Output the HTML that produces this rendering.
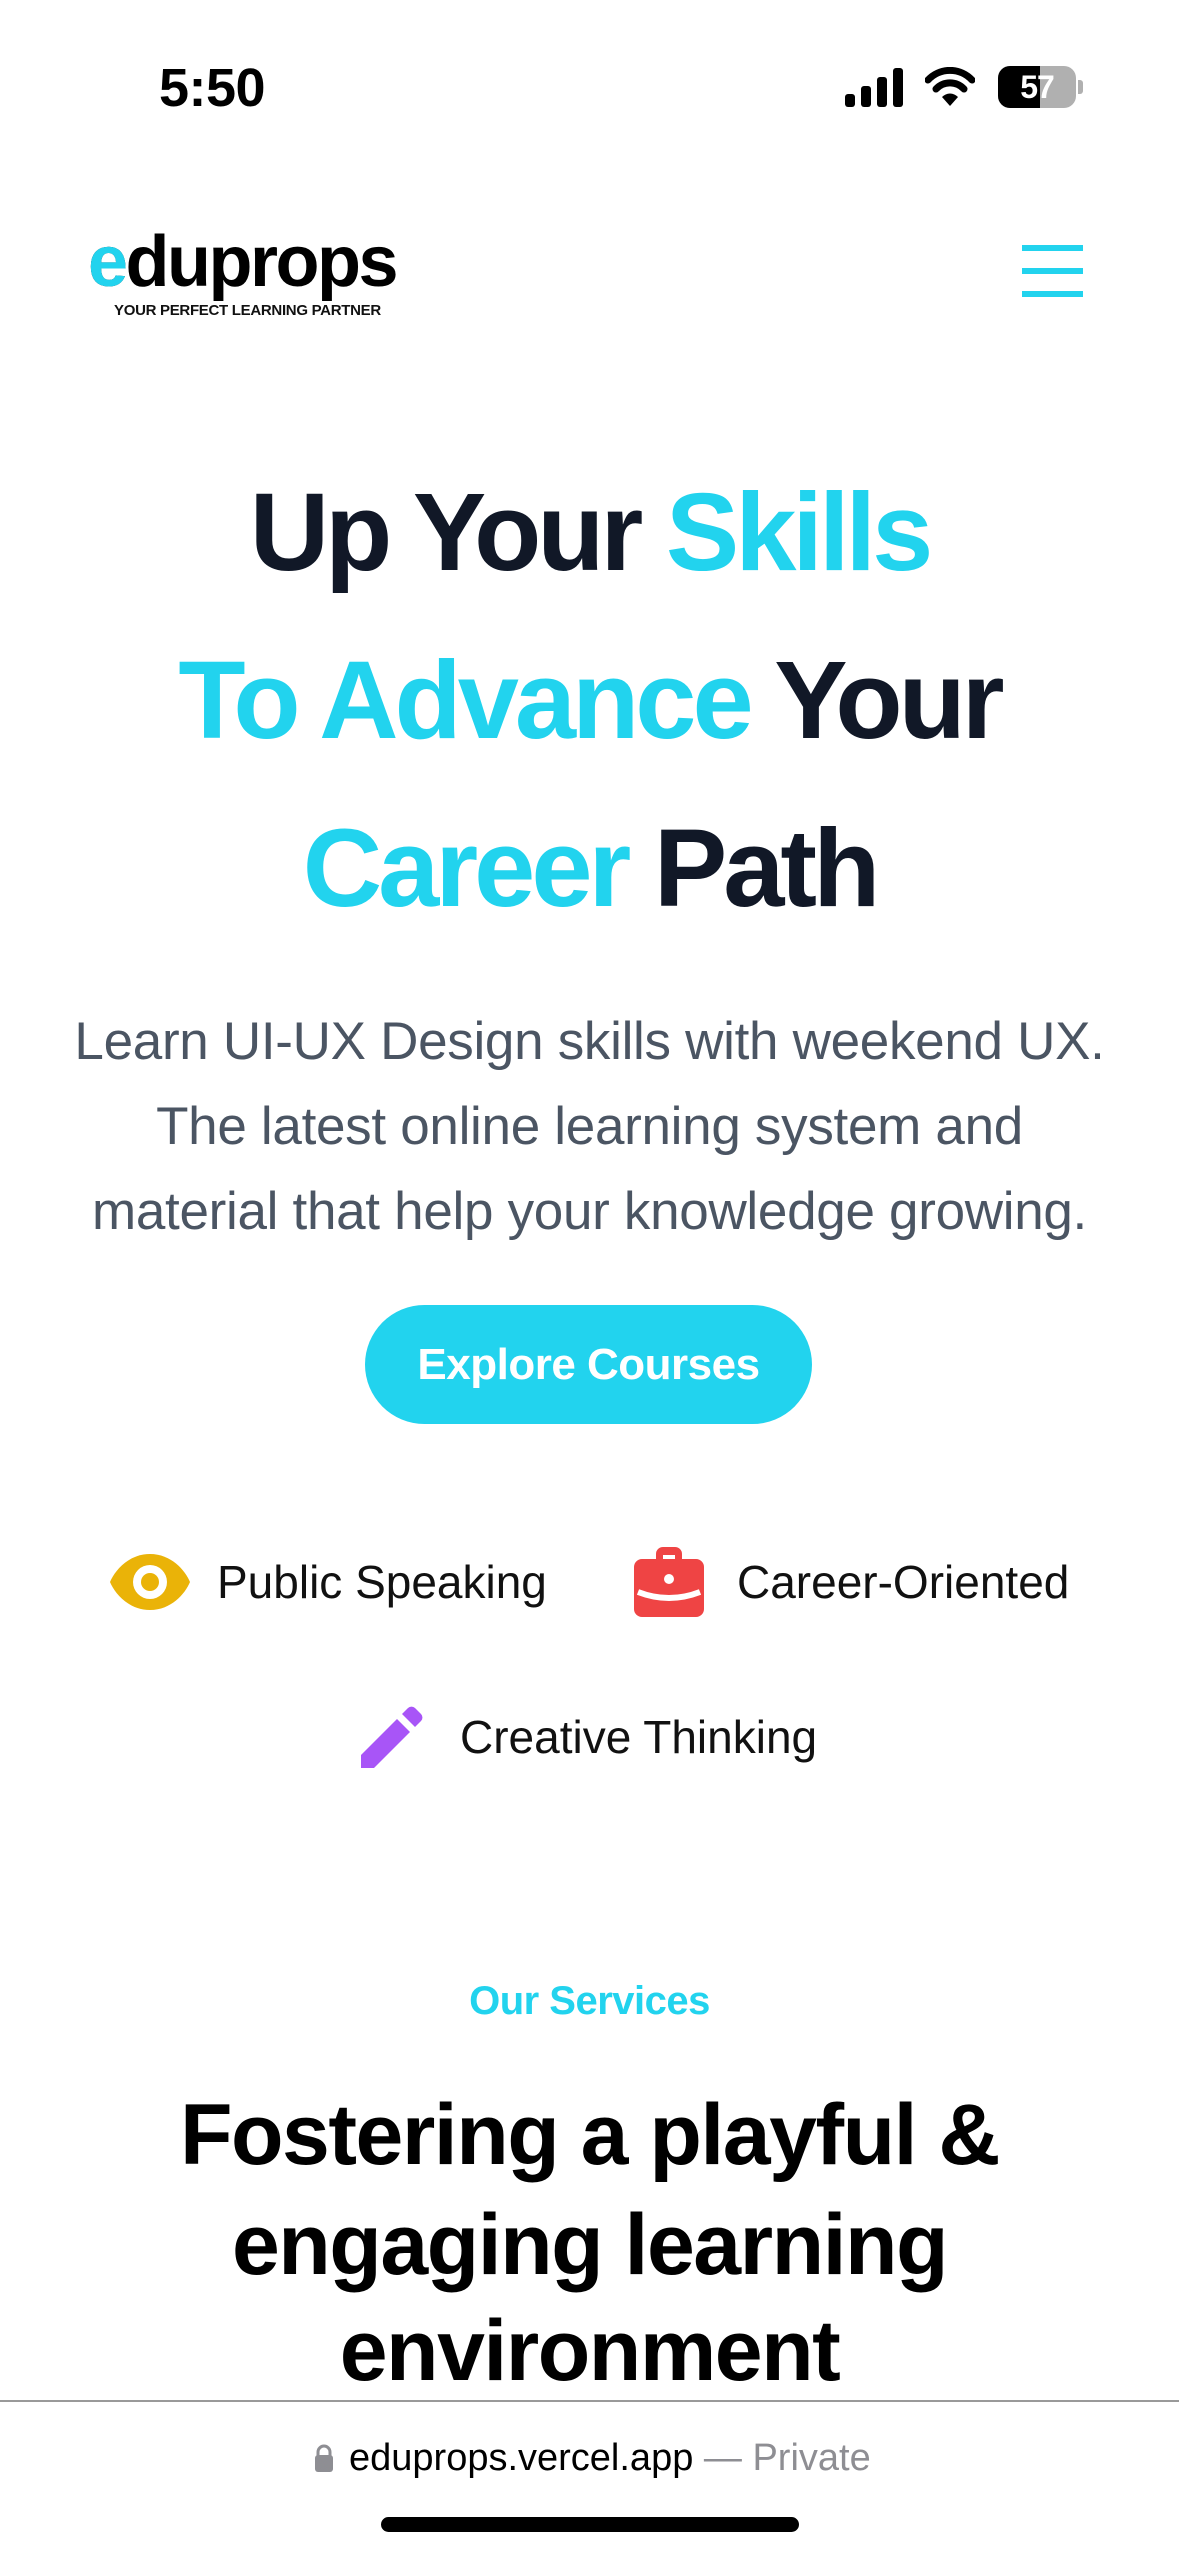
<!DOCTYPE html>
<html><head><meta charset="utf-8"><style>
*{margin:0;padding:0;box-sizing:border-box}
body{width:1179px;height:2556px;background:#fff;position:relative;overflow:hidden;font-family:"Liberation Sans",Arial,sans-serif}
.a{position:absolute}
.c{position:absolute;left:0;width:1179px;text-align:center;white-space:nowrap}
.h1{font-size:110px;font-weight:700;letter-spacing:-4px;color:#111827;height:140px;line-height:140px}
.cy{color:#22d3ee}
.p{font-size:53px;color:#4b5563;height:70px;line-height:70px;letter-spacing:-0.3px}
.h2{font-size:86px;font-weight:700;color:#000;height:110px;line-height:110px;letter-spacing:-1.5px}
.f{font-size:46px;color:#111;line-height:60px;height:60px;white-space:nowrap}
</style></head><body>
<!-- status bar -->
<div class="a" style="left:159px;top:58px;font-size:54px;font-weight:700;color:#000;line-height:60px;letter-spacing:-0.5px">5:50</div>
<svg class="a" style="left:845px;top:68px" width="60" height="40" viewBox="0 0 60 40"><rect x="0" y="26" width="10" height="13" rx="3"/><rect x="16" y="18" width="10" height="21" rx="3"/><rect x="32" y="9" width="10" height="30" rx="3"/><rect x="48" y="0" width="10" height="39" rx="3"/></svg>
<svg class="a" style="left:925px;top:67px" width="50" height="40" viewBox="0 0 50 40"><path d="M3 13 A30 30 0 0 1 47 13" stroke="#000" stroke-width="7" fill="none" stroke-linecap="round"/><path d="M11 22 A19 19 0 0 1 39 22" stroke="#000" stroke-width="7" fill="none" stroke-linecap="round"/><path d="M17 30 L25 39 L33 30 A11 11 0 0 0 17 30Z"/></svg>
<div class="a" style="left:998px;top:66px;width:78px;height:42px;border-radius:12px;background:#b0b0b0;overflow:hidden"><div style="width:42px;height:42px;background:#000"></div><div style="position:absolute;left:0;top:0;width:78px;text-align:center;line-height:42px;font-size:32px;font-weight:700;color:#fff;letter-spacing:-1px">57</div></div>
<div class="a" style="left:1078px;top:80px;width:5px;height:14px;background:#b0b0b0;border-radius:0 3px 3px 0"></div>
<!-- logo -->
<div class="a" style="left:88px;top:222px;font-size:72px;font-weight:700;letter-spacing:-2.5px;line-height:80px;color:#000">eduprops</div>
<div class="a" style="left:88px;top:222px;font-size:72px;font-weight:700;letter-spacing:-2.5px;line-height:80px;color:#22d3ee">e</div>
<div class="a" style="left:114px;top:301px;font-size:15px;font-weight:700;line-height:20px;color:#111;letter-spacing:-0.3px">YOUR PERFECT LEARNING PARTNER</div>
<!-- hamburger -->
<div class="a" style="left:1022px;top:245px;width:61px;height:6px;background:#22d3ee"></div>
<div class="a" style="left:1022px;top:268px;width:61px;height:6px;background:#22d3ee"></div>
<div class="a" style="left:1022px;top:291px;width:61px;height:6px;background:#22d3ee"></div>
<!-- hero -->
<div class="c h1" style="top:463px">Up Your <span class="cy">Skills</span></div>
<div class="c h1" style="top:631px"><span class="cy">To Advance</span> Your</div>
<div class="c h1" style="top:799px"><span class="cy">Career</span> Path</div>
<div class="c p" style="top:1007px">Learn UI-UX Design skills with weekend UX.</div>
<div class="c p" style="top:1092px">The latest online learning system and</div>
<div class="c p" style="top:1177px">material that help your knowledge growing.</div>
<div class="a" style="left:365px;top:1305px;width:447px;height:119px;border-radius:60px;background:#22d3ee;color:#fff;font-size:44px;font-weight:700;text-align:center;line-height:119px;letter-spacing:-0.5px">Explore Courses</div>
<!-- features -->
<svg class="a" style="left:109px;top:1552px" width="82" height="60" viewBox="0 0 82 60"><path d="M41 2 C62 2 76 18 81 30 C76 42 62 58 41 58 C20 58 6 42 1 30 C6 18 20 2 41 2Z" fill="#eab308"/><circle cx="41" cy="30" r="17" fill="#fff"/><circle cx="41" cy="30" r="9" fill="#eab308"/></svg>
<div class="a f" style="left:217px;top:1552px">Public Speaking</div>
<svg class="a" style="left:634px;top:1546px" width="70" height="72" viewBox="0 0 70 72"><path d="M22 14 V8 A7 7 0 0 1 29 1 H41 A7 7 0 0 1 48 8 V14 H41 V9 H29 V14Z" fill="#ef4444"/><rect x="0" y="13" width="70" height="58" rx="8" fill="#ef4444"/><path d="M4 46 Q35 58 66 46" stroke="#fff" stroke-width="6" fill="none"/><circle cx="35" cy="33" r="5" fill="#fff"/></svg>
<div class="a f" style="left:737px;top:1552px">Career-Oriented</div>
<svg class="a" style="left:360px;top:1706px" width="66" height="62" viewBox="0 0 66 62"><path d="M1 49 L37 13 L50 26 L14 62 H1Z" fill="#a855f7"/><path d="M42 8 L48 2 A5 5 0 0 1 55 2 L61 8 A5 5 0 0 1 61 15 L55 21Z" fill="#a855f7"/></svg>
<div class="a f" style="left:460px;top:1707px">Creative Thinking</div>
<!-- services -->
<div class="c" style="top:1976px;font-size:40px;font-weight:700;color:#22d3ee;line-height:50px;letter-spacing:-0.5px">Our Services</div>
<div class="c h2" style="top:2080px">Fostering a playful &amp;</div>
<div class="c h2" style="top:2190px">engaging learning</div>
<div class="c h2" style="top:2296px">environment</div>
<!-- bottom bar -->
<div class="a" style="left:0;top:2400px;width:1179px;height:156px;background:#fff;border-top:2px solid #999"></div>
<svg class="a" style="left:314px;top:2443px" width="20" height="30" viewBox="0 0 20 30"><path d="M4 13 V9 A6 6 0 0 1 16 9 V13" stroke="#8e8e93" stroke-width="3" fill="none"/><rect x="1" y="12" width="18" height="17" rx="3" fill="#8e8e93"/></svg>
<div class="a" style="left:349px;top:2436px;font-size:38px;line-height:44px;color:#000;white-space:nowrap">eduprops.vercel.app <span style="color:#8e8e93">— Private</span></div>
<div class="a" style="left:381px;top:2517px;width:418px;height:15px;border-radius:8px;background:#000"></div>
</body></html>
